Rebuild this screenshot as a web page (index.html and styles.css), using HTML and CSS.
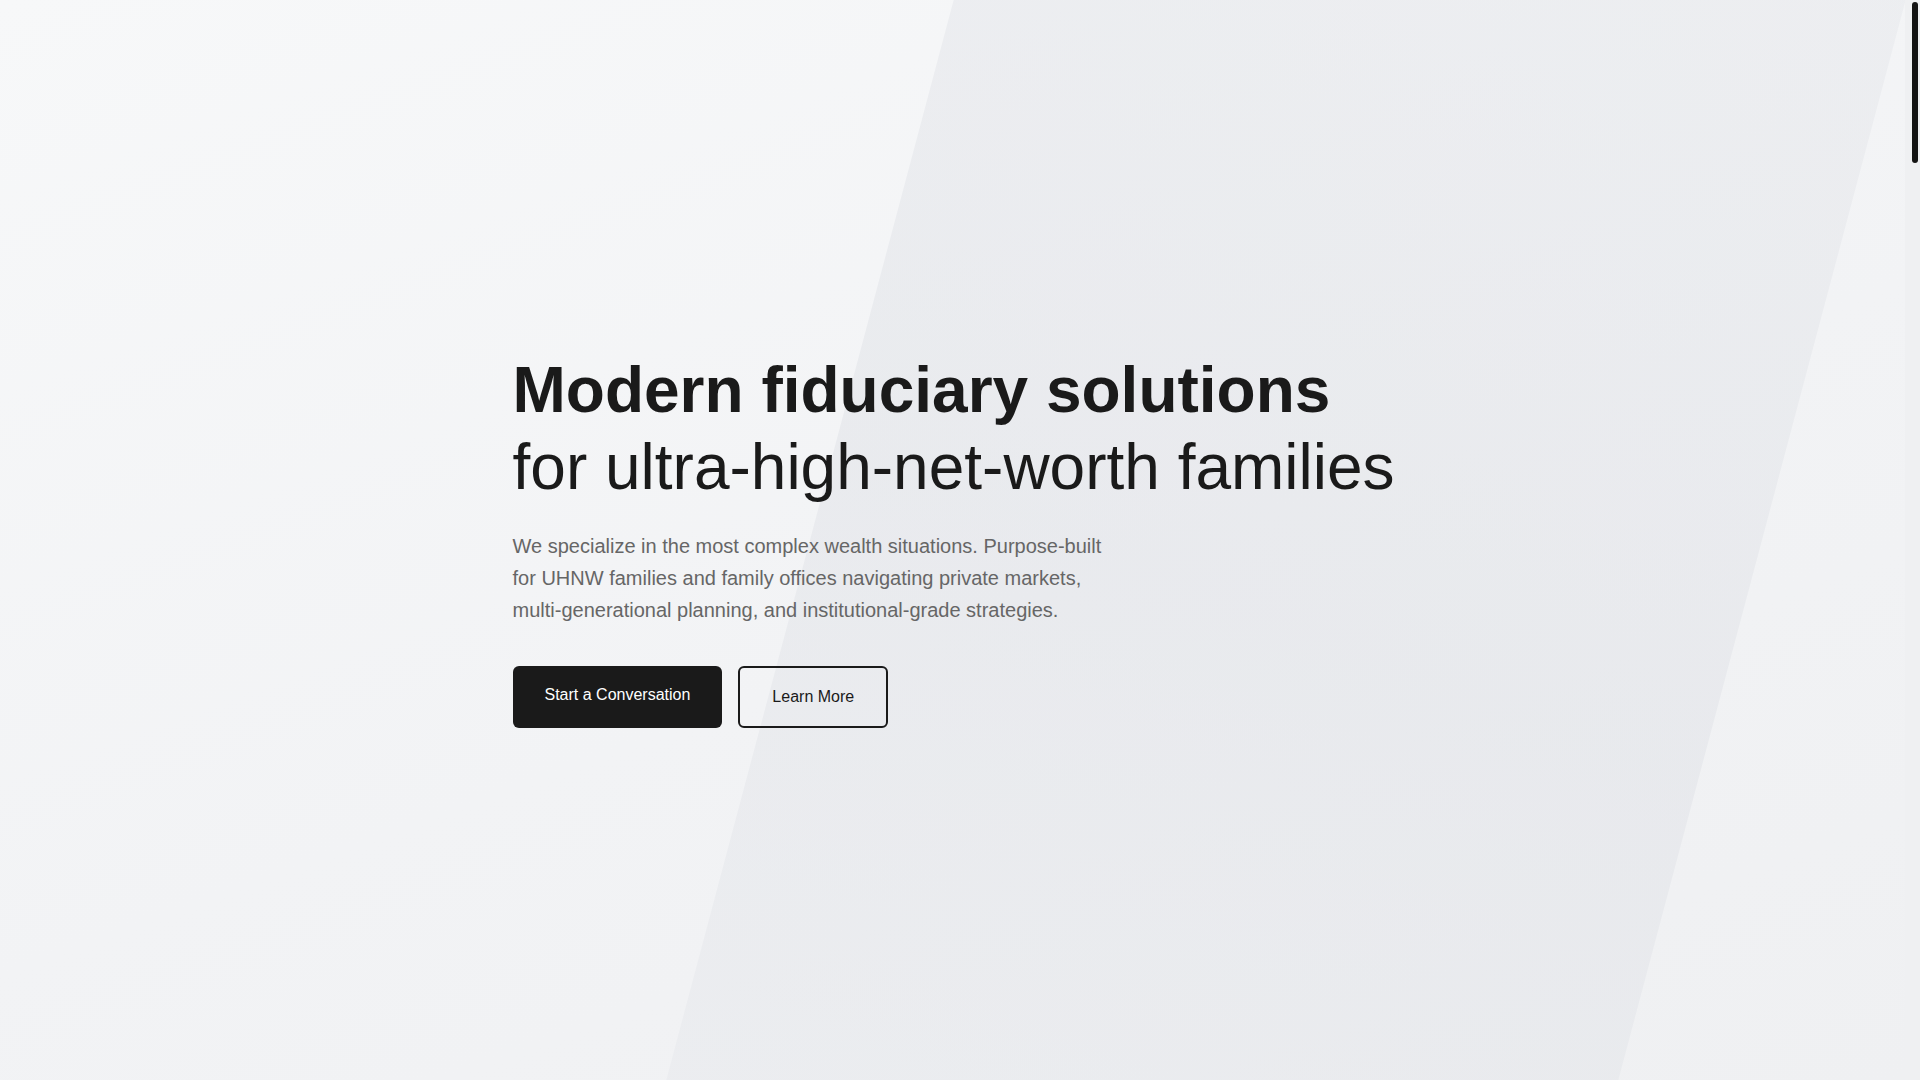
FILE: index.html
```html
<!DOCTYPE html>
<html lang="en">
<head>
<meta charset="utf-8">
<meta name="viewport" content="width=device-width, initial-scale=1">
<title>Modern fiduciary solutions</title>
<link rel="stylesheet" href="styles.css">
</head>
<body>
  <main class="page">
    <section class="hero">
      <div class="hero-band" aria-hidden="true"></div>
      <div class="hero-inner">
        <h1 class="hero-title">
          <span class="hero-title-strong">Modern fiduciary solutions</span>
          <span class="hero-title-light">for ultra-high-net-worth families</span>
        </h1>
        <p class="hero-lead">We specialize in the most complex wealth situations. Purpose-built for UHNW families and family offices navigating private markets, multi-generational planning, and institutional-grade strategies.</p>
        <div class="hero-actions">
          <a class="btn btn-primary" href="#contact">Start a Conversation</a>
          <a class="btn btn-outline" href="#about">Learn More</a>
        </div>
      </div>
    </section>
  </main>
  <div class="scroll-rail" aria-hidden="true">
    <div class="scroll-thumb"></div>
  </div>
</body>
</html>
```

FILE: styles.css
```css
html, body {
  margin: 0;
  padding: 0;
  height: 100%;
  overflow: hidden;
}

body {
  display: flex;
  font-family: "Liberation Sans", Arial, Helvetica, sans-serif;
  color: #1a1a1a;
  background: #f1f2f4;
}

.page {
  flex: 1;
  min-width: 0;
  height: 100vh;
}

/* thin dark scroll indicator on the right edge */
.scroll-rail {
  flex: 0 0 15px;
  height: 100vh;
  background: #eff0f2;
}

.scroll-thumb {
  width: 6px;
  height: 161px;
  margin: 2px 0 0 7px;
  border-radius: 3px;
  background: #141414;
}

.hero {
  position: relative;
  overflow: hidden;
  height: 100vh;
  display: flex;
  align-items: center;
  justify-content: center;
  background: linear-gradient(160deg, #f7f8f9 0%, #f2f3f5 55%, #eff0f2 100%);
}

/* slanted translucent panel behind the copy */
.hero-band {
  position: absolute;
  top: 0;
  bottom: 0;
  left: 810px;
  width: 952px;
  transform: skewX(-14.9deg);
  transform-origin: center;
  background: linear-gradient(200deg, rgba(228, 230, 234, 0.45) 0%, rgba(224, 226, 231, 0.52) 55%, rgba(229, 231, 235, 0.45) 100%);
  pointer-events: none;
}

.hero-inner {
  position: relative;
  width: 880px;
}

.hero-title {
  margin: 0 0 24px;
  font-size: 64px;
  line-height: 1.2;
  font-weight: 400;
  color: #1a1a1a;
  white-space: nowrap;
}

.hero-title-strong {
  display: block;
  font-weight: 700;
}

.hero-title-light {
  display: block;
  font-weight: 400;
}

.hero-lead {
  margin: 0 0 40px;
  max-width: 600px;
  font-size: 20px;
  line-height: 32px;
  color: #666666;
}

.hero-actions {
  display: flex;
  gap: 16px;
}

.btn {
  display: inline-block;
  font-size: 16px;
  line-height: 20px;
  text-decoration: none;
  border-radius: 6px;
}

.btn-primary {
  padding: 19px 32px 23px;
  background: #1a1a1a;
  color: #ffffff;
}

.btn-outline {
  padding: 19px 32px 18px;
  border: 2px solid #1a1a1a;
  color: #1a1a1a;
  background: transparent;
}
```
